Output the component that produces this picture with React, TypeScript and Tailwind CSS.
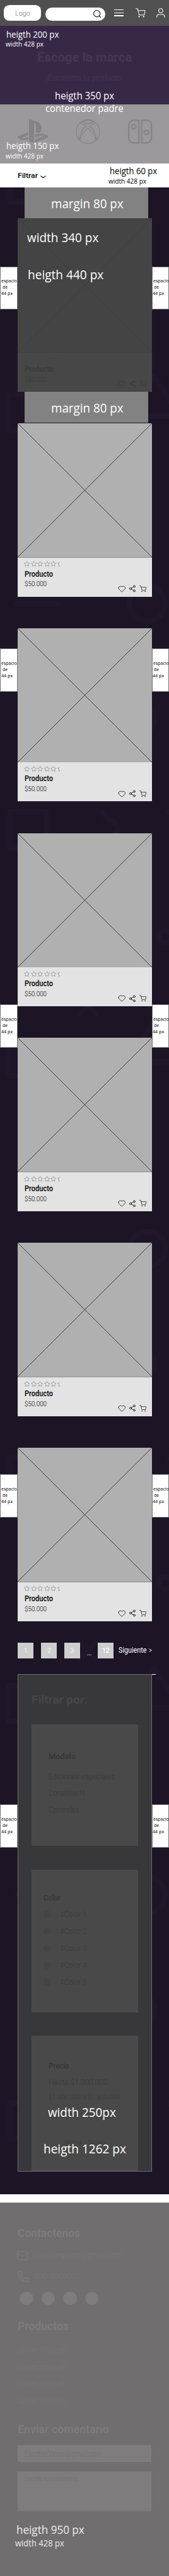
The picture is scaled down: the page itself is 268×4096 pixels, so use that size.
import { useLayoutEffect, useRef } from "react";
import type { ReactNode } from "react";
import { Heart, Mail, Phone, Share2, Star } from "lucide-react";
import { FaPlaystation } from "react-icons/fa";

type WithClass = { className?: string };

/* One line of text, condensed or expanded to fill the width of its box. */
function Line({ className = "", children }: WithClass & { children: ReactNode }) {
  const box = useRef<HTMLDivElement>(null);
  const text = useRef<HTMLSpanElement>(null);
  useLayoutEffect(() => {
    if (!box.current || !text.current) return;
    text.current.style.transform = "none";
    const ratio = box.current.getBoundingClientRect().width / text.current.getBoundingClientRect().width;
    text.current.style.transform = `scaleX(${ratio})`;
  });
  return (
    <div ref={box} className={`flex whitespace-nowrap leading-none ${className}`}>
      <span ref={text} className="block shrink-0 origin-left">
        {children}
      </span>
    </div>
  );
}

const note = "font-['Open_Sans',sans-serif]";

function Cart({ className = "", stroke = 2 }: WithClass & { stroke?: number }) {
  return (
    <svg viewBox="0 0 25 24" className={className} fill="none" stroke="currentColor" strokeWidth={stroke} strokeLinejoin="round" strokeLinecap="round">
      <path d="M1 1.2h3.8L9 17h13l2-11H6.2" />
      <circle cx="9" cy="21.5" r="1.8" fill="currentColor" stroke="none" />
      <circle cx="20.3" cy="21.5" r="1.8" fill="currentColor" stroke="none" />
    </svg>
  );
}

function XboxIcon() {
  return (
    <svg viewBox="0 0 62 62" className="h-[62px] w-[62px]" fill="none" stroke="currentColor" strokeWidth="1.9" strokeLinejoin="round">
      <circle cx="31" cy="31" r="30" />
      <path d="M16.7 5.5Q31-.5 45.3 5.5L31 12.2Z" />
      <path d="M12.3 7.9 26.3 16Q12 30 9.5 50.5" />
      <path d="M49.7 7.9 35.7 16Q50 30 52.5 50.5" />
      <path d="M10.8 51.6Q15 35 31 21Q47 35 51.2 51.6" />
    </svg>
  );
}

function SwitchIcon() {
  return (
    <svg viewBox="0 0 62 62" className="h-[62px] w-[62px]" fill="none" stroke="currentColor" strokeWidth="3.6">
      <path d="M27.4 2v57.6H14.5A12.5 12.5 0 0 1 2 47V14.5A12.5 12.5 0 0 1 14.5 2Z" />
      <path d="M34.6 2v57.6h12.2A12.5 12.5 0 0 0 59.3 47V14.5A12.5 12.5 0 0 0 46.8 2Z" />
      <circle cx="14.5" cy="18.3" r="5.6" />
      <circle cx="46.7" cy="32.5" r="5.6" />
    </svg>
  );
}

function Header() {
  return (
    <header className="flex h-[65px] bg-[#505050] pl-[10px] text-white">
      <div className="mt-[13px] h-[40px] w-[94px] rounded-[14px] bg-white pl-[29px] pt-[12px] text-[#777777]">
        <Line className="w-[38px] text-[18px] font-light">Logo</Line>
      </div>
      <div className="ml-[11px] mt-[19px] flex h-[33px] w-[152px] justify-end rounded-full bg-white pr-[11px] pt-[6px] text-black">
        <svg viewBox="0 0 20 20" className="h-[20px] w-[20px]" fill="none" stroke="currentColor" strokeWidth="1.6" strokeLinecap="round">
          <circle cx="9" cy="9" r="8.1" />
          <path d="m14.8 14.8 4.4 4.4" />
        </svg>
      </div>
      <div className="ml-[22px] mt-[24px] flex h-[17px] w-[24px] flex-col justify-between">
        <div className="h-[2px] bg-white" />
        <div className="h-[2px] bg-white" />
        <div className="h-[2px] bg-white" />
      </div>
      <Cart className="ml-[30px] mt-[20.5px] h-[24px] w-[25px]" stroke={1.6} />
      <svg viewBox="0 0 22 24" className="ml-[28px] mt-[20.5px] h-[24px] w-[22px]" fill="none" stroke="currentColor" strokeWidth="1.7" strokeLinecap="round">
        <circle cx="11" cy="6.4" r="5.2" />
        <path d="M1.3 23v-2a5 5 0 0 1 5-5h9.4a5 5 0 0 1 5 5v2" />
      </svg>
    </header>
  );
}

function Hero() {
  return (
    <section className="relative">
      <div className="relative flex h-[200px] flex-col items-center bg-[#372848] pt-[65px]">
        <Line className="w-[240px] text-[32px] font-bold text-[#453654]">Escoge la marca</Line>
        <Line className="mt-[28px] w-[195px] text-[19px] font-light text-[#463755]">¡Encuentra tu producto!</Line>
        <div className={`absolute left-[15px] top-[9.6px] text-white ${note}`}>
          <Line className="ml-[1px] w-[133px] text-[23.5px]">heigth 200 px</Line>
          <Line className="mt-[6px] w-[96px] text-[17px]">width 428 px</Line>
        </div>
      </div>
      <div className="relative flex h-[150px] bg-[#9b999b] pl-[44px] text-[#848484]">
        <FaPlaystation className="mt-[34px] h-[68.5px] w-[77px]" />
        <div className="ml-[71px] mt-[38px]">
          <XboxIcon />
        </div>
        <div className="ml-[70px] mt-[38px]">
          <SwitchIcon />
        </div>
        <div className={`absolute left-[15px] top-[92.6px] text-white ${note}`}>
          <Line className="ml-[1px] w-[133px] text-[23.5px]">heigth 150 px</Line>
          <Line className="mt-[6px] w-[96px] text-[17px]">width 428 px</Line>
        </div>
      </div>
      <div className={`absolute left-0 top-[164.5px] flex w-full flex-col items-center text-white ${note}`}>
        <Line className="w-[150px] text-[26.5px]">heigth 350 px</Line>
        <Line className="mt-[6px] w-[197.5px] text-[26.5px]">contenedor padre</Line>
      </div>
    </section>
  );
}

function FilterBar() {
  return (
    <div className="flex h-[60px] bg-white pl-[45px] text-black">
      <Line className="mt-[22.4px] w-[51px] text-[18.5px] font-medium">Filtrar</Line>
      <svg viewBox="0 0 14 8" className="ml-[6px] mt-[30px] h-[8px] w-[14px]" fill="none" stroke="currentColor" strokeWidth="1.8" strokeLinecap="round" strokeLinejoin="round">
        <path d="M1.2 1.4 7 6l5.8-4.6" />
      </svg>
      <div className={`ml-[159px] mt-[7px] ${note}`}>
        <Line className="ml-[2px] w-[120px] text-[23.5px]">heigth 60 px</Line>
        <Line className="mt-[6px] w-[96px] text-[17px]">width 428 px</Line>
      </div>
    </div>
  );
}

function Backdrop() {
  const tiles = [-61, 1577, 3216, 4854];
  return (
    <svg viewBox="0 0 428 5093" className="absolute left-0 top-0 h-[5093px] w-[428px]" fill="none" stroke="#20182a" strokeWidth="14" strokeLinecap="round" strokeLinejoin="round">
      {tiles.map((y) => (
        <g key={y} transform={`translate(0 ${y})`}>
          <rect x="25.500" y="7" width="91" height="91" />
          <path d="M262 7c2 26 36 22 36 44q0 8-6 14" />
          <circle cx="432" cy="8" r="3" />
          <circle cx="418" cy="325" r="16" />
          <path d="m201 475 42 45m0-45-42 45" />
          <path d="M390 540 325 642H455Z" />
          <rect x="21" y="586" width="91" height="91" />
          <path d="M44 1117H147" />
          <circle cx="373" cy="1117" r="45" />
          <circle cx="352" cy="1408" r="39" />
        </g>
      ))}
    </svg>
  );
}

function MarginBlock({ className = "" }: WithClass) {
  return (
    <div className={`relative ml-[63px] w-[312px] bg-[#828282] pl-[66px] pt-[26px] text-white ${className} ${note}`}>
      <Line className="w-[183px] text-[32px]">margin 80 px</Line>
    </div>
  );
}

function SpaceNote({ className }: { className: string }) {
  return (
    <div className={`absolute h-[110px] w-[44px] border border-[#777777] bg-white pt-[29.500px] text-black ${note} ${className}`}>
      <Line className="ml-[1.500px] w-[39.500px] text-[12px]">espacio</Line>
      <Line className="ml-[4.500px] mt-[4px] w-[13px] text-[12px]">de</Line>
      <Line className="ml-[1px] mt-[4px] w-[29px] text-[12px]">44 px</Line>
    </div>
  );
}

function ProductCard({ children }: { children?: ReactNode }) {
  return (
    <article className="relative ml-[44px] flex h-[440px] w-[340px] flex-col bg-[#e3e3e3] text-black">
      <svg viewBox="0 0 340 341" className="h-[341px] w-[340px] bg-[#b0b0b0]" stroke="#1c1c1c" strokeWidth="1.2">
        <path d="M0 0 340 340M340 0 0 340" />
        <path d="M0 340.500H340" stroke="#858585" />
      </svg>
      <div className="ml-[16.500px] mt-[9px] flex w-[90.500px] gap-[2px] overflow-hidden text-[#555555]">
        {[0, 1, 2, 3, 4, 5].map((n) => (
          <Star key={n} className="h-[15px] w-[15px] shrink-0" strokeWidth={1.2} />
        ))}
      </div>
      <div className="flex pl-[19px]">
        <div className="w-[236px]">
          <Line className="mt-[9.500px] w-[72px] text-[19px] font-medium">Producto</Line>
          <Line className="mt-[8px] w-[56px] text-[16.500px] font-light">$50.000</Line>
        </div>
        <div className="mt-[45px] flex items-center">
          <Heart className="h-[20px] w-[20px]" strokeWidth={1.4} />
          <Share2 className="ml-[6px] h-[19px] w-[19px]" strokeWidth={1.6} />
          <Cart className="ml-[8px] h-[17px] w-[18px]" stroke={1.5} />
        </div>
      </div>
      {children}
    </article>
  );
}

function Pagination() {
  const page = "h-[40px] w-[40px] bg-[#cecece] pt-[12px]";
  return (
    <nav className="relative mt-[54px] flex h-[40px] pl-[45px] text-white">
      <div className={`${page} pl-[16px] text-[#f0f0f0]`}>
        <Line className="w-[8px] text-[18px]">1</Line>
      </div>
      <div className={`${page} ml-[19px] pl-[15px] text-[#f0f0f0]`}>
        <Line className="w-[10px] text-[18px]">2</Line>
      </div>
      <div className={`${page} ml-[19px] pl-[15px] text-[#f0f0f0]`}>
        <Line className="w-[10px] text-[18px]">3</Line>
      </div>
      <Line className="ml-[17px] mt-[18px] w-[12px] text-[18px]">...</Line>
      <div className={`${page} ml-[16px] pl-[11px]`}>
        <Line className="w-[19px] text-[18px] font-medium">12</Line>
      </div>
      <Line className="ml-[12px] mt-[11.500px] w-[71px] text-[19px]">Siguiente</Line>
      <svg viewBox="0 0 8 10" className="ml-[6px] mt-[15px] h-[10px] w-[8px]" fill="none" stroke="currentColor" strokeWidth="1.5">
        <path d="M.8 1 7 5 .8 9" />
      </svg>
    </nav>
  );
}

function FilterPanel() {
  const group = "ml-[33px] w-[270px] bg-[#494949] text-[#3a3a3a]";
  return (
    <div className="relative mt-[40px] pl-[44px]">
      <div className="h-px w-[351px] bg-white" />
      <aside className="relative -mt-px ml-[1px] h-[1262px] w-[340px] border border-[#6e6e70] bg-[#38383a]">
        <Line className="ml-[34px] mt-[49.700px] w-[142px] text-[30px] font-bold text-[#464648]">Filtrar por:</Line>
        <div className={`${group} mt-[47px] h-[308px] pl-[44px] pt-[71px]`}>
          <Line className="w-[69px] text-[20px] font-bold text-[#383838]">Modelo</Line>
          <Line className="mt-[31px] w-[168px] text-[20px] font-light">Ediciones especiales</Line>
          <Line className="mt-[23px] w-[91px] text-[20px] font-light">Consolas N</Line>
          <Line className="mt-[23px] w-[78px] text-[20px] font-light">Controles</Line>
        </div>
        <div className={`${group} mt-[60px] h-[362px] pl-[30px] pt-[63px]`}>
          <Line className="w-[43px] text-[20px] font-medium text-[#363636]">Color</Line>
          <ul className="mt-[21px] flex flex-col gap-[23px]">
            {[1, 2, 3, 4, 5].map((n) => (
              <li key={n} className="flex gap-[22px]">
                <div className="h-[20px] w-[20px] rounded-full bg-[#444444]" />
                <Line className="w-[68px] text-[20px] font-light">#Color {n}</Line>
              </li>
            ))}
          </ul>
        </div>
        <div className={`${group} mt-[60px] h-[343px] pl-[44px] pt-[66.700px]`}>
          <Line className="w-[52px] text-[20px] font-medium text-[#363636]">Precio</Line>
          <Line className="mt-[21px] w-[150px] text-[20px] font-light">Hasta $1.000.000</Line>
          <Line className="mt-[21px] w-[181px] text-[17px] font-light">$1.000.000 a $1.500.000</Line>
          <Line className="mt-[28px] w-[161px] text-[20px] font-light">Más de $1.500.000</Line>
          <div className="ml-[39px] mt-[47.700px] flex gap-[15px]">
            <Line className="w-[44px] text-[15px] font-light">Mínimo</Line>
            <Line className="w-[46px] text-[15px] font-light">Maximo</Line>
          </div>
        </div>
        <div className={`absolute left-[64px] top-[1094.500px] text-white ${note}`}>
          <Line className="ml-[10px] w-[172px] text-[31px]">width 250px</Line>
          <Line className="mt-[62px] w-[209px] text-[31px]">heigth 1262 px</Line>
        </div>
      </aside>
    </div>
  );
}

function Products() {
  return (
    <main className="relative h-[5093px] bg-[#1d1426]">
      <Backdrop />
      <MarginBlock className="h-[79px]" />
      <ProductCard>
        <div className={`absolute inset-0 bg-[rgba(60,60,60,0.934)] pl-[25px] pt-[34px] text-white ${note}`}>
          <Line className="w-[181px] text-[31.500px]">width 340 px</Line>
          <Line className="ml-[1px] mt-[61.500px] w-[192px] text-[31.500px]">heigth 440 px</Line>
        </div>
      </ProductCard>
      <MarginBlock className="mb-[1px] h-[79px]" />
      <div className="flex flex-col gap-[80px]">
        <ProductCard />
        <ProductCard />
        <ProductCard />
        <ProductCard />
        <ProductCard />
        <ProductCard />
      </div>
      <Pagination />
      <FilterPanel />
      <SpaceNote className="left-0 top-[201px]" />
      <SpaceNote className="right-0 top-[201px]" />
      <SpaceNote className="left-0 top-[1171px]" />
      <SpaceNote className="right-0 top-[1171px]" />
      <SpaceNote className="left-0 top-[2074px]" />
      <SpaceNote className="right-0 top-[2074px]" />
      <SpaceNote className="left-0 top-[3266px]" />
      <SpaceNote className="right-0 top-[3266px]" />
      <SpaceNote className="left-0 top-[4104px]" />
      <SpaceNote className="right-0 top-[4104px]" />
    </main>
  );
}

function Footer() {
  return (
    <footer className="mt-[21px] h-[950px] border-t border-[#959395] bg-[#706e6f] pl-[45px] pt-[61.600px] text-[#797778]">
      <Line className="w-[158px] text-[29px] font-bold text-[#7d7b7c]">Contactenos</Line>
      <div className="-ml-[3px] mt-[27px] flex h-[31px] items-center">
        <Mail className="h-[31px] w-[31px] text-[#7d7b7c]" strokeWidth={1.4} />
        <Line className="ml-[10px] w-[226px] text-[20px] font-light">LoremImpsum@gmail.com</Line>
      </div>
      <div className="-ml-[2px] mt-[22px] flex h-[31px] items-center">
        <Phone className="h-[31px] w-[31px] text-[#7d7b7c]" strokeWidth={1.4} />
        <Line className="ml-[10px] w-[120px] text-[20px] font-light">000-0000000</Line>
      </div>
      <div className="ml-[5px] mt-[23.500px] flex gap-[21px]">
        {[0, 1, 2, 3].map((n) => (
          <div key={n} className="h-[34px] w-[34px] rounded-full bg-[#7e7c7d]" />
        ))}
      </div>
      <Line className="mt-[40px] w-[129px] text-[29px] font-bold text-[#7d7b7c]">Productos</Line>
      <ul className="mt-[36px] flex flex-col gap-[23px]">
        {[0, 1, 2, 3].map((n) => (
          <li key={n}>
            <Line className="w-[124px] text-[20px] font-light">Lorem Impsum</Line>
          </li>
        ))}
      </ul>
      <Line className="mt-[47.500px] w-[231px] text-[29px] font-bold text-[#7d7b7c]">Enviar comentario</Line>
      <div className="mt-[25px] h-[43px] w-[338px] bg-[#7e7c7d] pl-[18px] pt-[13.500px] text-[#737172]">
        <Line className="w-[196px] text-[19px] font-light">EscribeCorreo@gmail.com</Line>
      </div>
      <div className="mt-[24px] h-[101px] w-[338px] bg-[#7e7c7d] pl-[18px] pt-[11.500px] text-[#737172]">
        <Line className="w-[135px] text-[16px] font-light">Escribe tu comentario</Line>
      </div>
      <div className={`-ml-[6px] mt-[32px] text-[#ececec] ${note}`}>
        <Line className="ml-[2px] w-[172px] text-[29.500px]">heigth 950 px</Line>
        <Line className="mt-[9px] w-[124px] text-[22px]">width 428 px</Line>
      </div>
    </footer>
  );
}

export default function App() {
  return (
    <div className="h-[4096px] w-[268px] overflow-hidden bg-[#706e6f]">
      <div className="w-[428px] bg-white font-['Roboto',sans-serif] [zoom:0.6266]">
        <Header />
        <Hero />
        <FilterBar />
        <Products />
        <Footer />
      </div>
    </div>
  );
}
